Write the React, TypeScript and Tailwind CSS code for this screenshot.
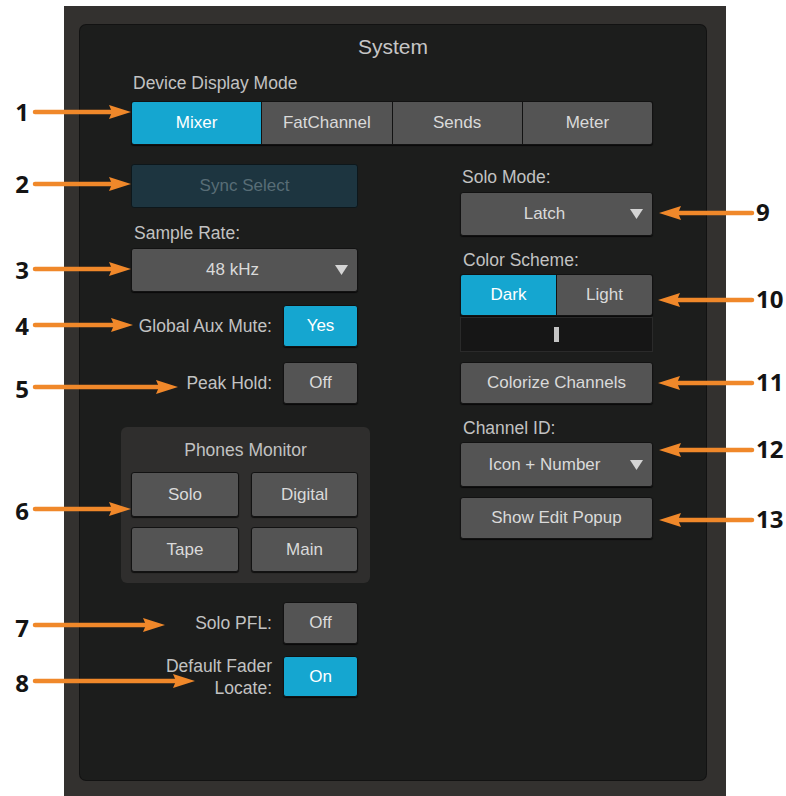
import React from 'react';

const font = { fontFamily: '"Liberation Sans", Arial, sans-serif' };

const gray = 'bg-[#545454] text-[#dadada]';
const blue = 'bg-[#15a6d0] text-white';

function Btn({ label, active, className = '' }: { label: string; active?: boolean; className?: string }) {
  return (
    <div
      className={`flex items-center justify-center rounded-[3px] border border-[#121212] text-[17px] shadow-[0_1px_1px_rgba(0,0,0,0.7)] ${
        active ? blue : gray
      } ${className}`}
    >
      {label}
    </div>
  );
}

function Dropdown({ label, className = '' }: { label: string; className?: string }) {
  return (
    <div
      className={`relative flex items-center justify-center rounded-[3px] border border-[#121212] pr-[24px] text-[17px] shadow-[0_1px_1px_rgba(0,0,0,0.7)] ${gray} ${className}`}
    >
      {label}
      <svg className="absolute right-[9px] top-1/2 -translate-y-1/2" width="13" height="10" viewBox="0 0 13 10">
        <polygon points="0,0 13,0 6.5,10" fill="#d4d4d4" />
      </svg>
    </div>
  );
}

function Segmented({ items, active }: { items: string[]; active: number }) {
  return (
    <div className="flex h-full gap-px rounded-[3px] bg-[#121212] p-px shadow-[0_1px_1px_rgba(0,0,0,0.7)]">
      {items.map((it, i) => (
        <div
          key={it}
          className={`flex flex-1 items-center justify-center text-[17px] ${i === 0 ? 'rounded-l-[2px]' : ''} ${
            i === items.length - 1 ? 'rounded-r-[2px]' : ''
          } ${i === active ? blue : gray}`}
        >
          {it}
        </div>
      ))}
    </div>
  );
}

function Toggle({ label, value, active, h = 'h-[42px]' }: { label: React.ReactNode; value: string; active?: boolean; h?: string }) {
  return (
    <div className={`flex items-center ${h}`}>
      <div className="flex-1 pr-[11px] text-right text-[17.5px] leading-[22px] text-[#c2c2c2]">{label}</div>
      <Btn label={value} active={active} className="h-full w-[75px]" />
    </div>
  );
}

const Label = ({ children, className = '' }: { children: React.ReactNode; className?: string }) => (
  <div className={`h-[20px] text-[17.5px] leading-[20px] text-[#c2c2c2] ${className}`}>{children}</div>
);

type Arrow = { y: number; tip: number; n: string; ny: number; right?: boolean };

const arrows: Arrow[] = [
  { y: 112, tip: 131, n: '1', ny: 113 },
  { y: 184, tip: 131, n: '2', ny: 185 },
  { y: 269, tip: 131, n: '3', ny: 271 },
  { y: 325, tip: 133, n: '4', ny: 327 },
  { y: 387, tip: 178, n: '5', ny: 390 },
  { y: 509, tip: 131, n: '6', ny: 512 },
  { y: 625, tip: 165, n: '7', ny: 629 },
  { y: 681, tip: 195, n: '8', ny: 684 },
  { y: 213, tip: 659, n: '9', ny: 213, right: true },
  { y: 300, tip: 658, n: '10', ny: 300, right: true },
  { y: 383, tip: 658, n: '11', ny: 383, right: true },
  { y: 450, tip: 659, n: '12', ny: 450, right: true },
  { y: 520, tip: 659, n: '13', ny: 520, right: true },
];

function Callouts() {
  return (
    <>
      <svg className="pointer-events-none absolute left-0 top-0" width="786" height="796">
        {arrows.map((a) => {
          const d = a.right ? 1 : -1;
          const base = a.tip + 19 * d;
          const tail = a.right ? 752 : 35;
          return (
            <g key={a.n} fill="#f0882a" stroke="#f0882a">
              <line x1={tail} y1={a.y} x2={base} y2={a.y} strokeWidth="4.5" strokeLinecap="round" />
              <polygon
                stroke="none"
                points={`${a.tip},${a.y} ${a.tip + 22 * d},${a.y - 7} ${base},${a.y} ${a.tip + 22 * d},${a.y + 7}`}
              />
            </g>
          );
        })}
      </svg>
      {arrows.map((a) => (
        <div
          key={a.n}
          className={`absolute text-[24px] font-bold leading-[28px] text-[#141414] ${a.right ? 'left-[756px]' : 'left-0 w-[44px] text-center'}`}
          style={{ top: a.ny - 15, fontFamily: '"Open Sans", sans-serif' }}
        >
          {a.n}
        </div>
      ))}
    </>
  );
}

export default function App() {
  return (
    <div className="relative h-[796px] w-[786px] overflow-hidden bg-white" style={font}>
      <div className="ml-[64px] mt-[6px] h-[790px] w-[662px] bg-[#33312f] px-[16px] pt-[19px]">
        <div className="h-[755px] w-[626px] rounded-[6px] bg-[#1c1d1c] shadow-[0_0_0_1px_#121212]">
          <div className="pt-[10px] text-center text-[21px] leading-[24px] text-[#c6c6c6]">System</div>
          <Label className="ml-[53px] mt-[14px]">Device Display Mode</Label>
          <div className="ml-[51px] mt-[8px] h-[44px] w-[522px]">
            <Segmented items={['Mixer', 'FatChannel', 'Sends', 'Meter']} active={0} />
          </div>

          <div className="ml-[51px] flex gap-[102px]">
            {/* left column */}
            <div className="flex w-[227px] flex-col">
              <div className="mt-[19px] flex h-[44px] items-center justify-center rounded-[3px] border border-[#0d171b] bg-[#1d3540] text-[17px] text-[#586d76]">
                Sync Select
              </div>
              <Label className="ml-[3px] mt-[15px]">Sample Rate:</Label>
              <Dropdown label="48 kHz" className="mt-[5px] h-[44px]" />
              <div className="mt-[13px]">
                <Toggle label="Global Aux Mute:" value="Yes" active />
              </div>
              <div className="mt-[15px]">
                <Toggle label="Peak Hold:" value="Off" />
              </div>
              <div className="-ml-[10px] mt-[23px] h-[156px] w-[249px] rounded-[6px] bg-[#2f2e2d] px-[10px] pt-[12px]">
                <div className="text-center text-[17.5px] leading-[22px] text-[#c2c2c2]">Phones Monitor</div>
                <div className="mt-[11px] grid grid-cols-[108px_107px] gap-x-[12px] gap-y-[10px]">
                  <Btn label="Solo" className="h-[45px]" />
                  <Btn label="Digital" className="h-[45px]" />
                  <Btn label="Tape" className="h-[45px]" />
                  <Btn label="Main" className="h-[45px]" />
                </div>
              </div>
              <div className="mt-[19px]">
                <Toggle label="Solo PFL:" value="Off" />
              </div>
              <div className="mt-[12px]">
                <Toggle
                  label={
                    <>
                      Default Fader
                      <br />
                      Locate:
                    </>
                  }
                  value="On"
                  active
                  h="h-[41px]"
                />
              </div>
            </div>

            {/* right column */}
            <div className="flex w-[193px] flex-col">
              <Label className="ml-[2px] mt-[22px]">Solo Mode:</Label>
              <Dropdown label="Latch" className="mt-[5px] h-[44px]" />
              <Label className="ml-[3px] mt-[14px]">Color Scheme:</Label>
              <div className="mt-[4px] h-[42px]">
                <Segmented items={['Dark', 'Light']} active={0} />
              </div>
              <div className="mt-px flex h-[35px] items-center justify-center border border-[#2a2a2a] bg-[#161616]">
                <div className="h-[15px] w-[5px] bg-[#c4c4c4]" />
              </div>
              <Btn label="Colorize Channels" className="mt-[10px] h-[42px]" />
              <Label className="ml-[3px] mt-[14px]">Channel ID:</Label>
              <Dropdown label="Icon + Number" className="mt-[4px] h-[45px]" />
              <Btn label="Show Edit Popup" className="mt-[10px] h-[42px]" />
            </div>
          </div>
        </div>
      </div>
      <Callouts />
    </div>
  );
}
